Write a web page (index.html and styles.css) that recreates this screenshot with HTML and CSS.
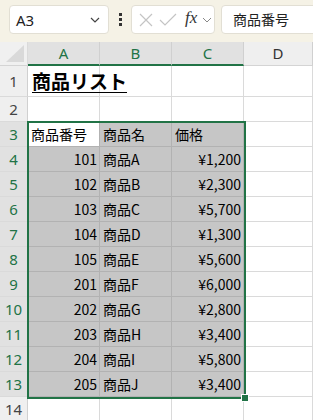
FILE: index.html
```html
<!DOCTYPE html>
<html lang="ja">
<head>
    <meta charset="UTF-8">
    <title>商品リスト</title>
    <link rel="stylesheet" href="styles.css">
</head>
<body>
    <div class="toolbar">
        <div class="namebox">
            <span>A3</span>
            <svg class="chev" width="10" height="6" viewBox="0 0 10 6"><polyline points="1,1 5,5 9,1" fill="none" stroke="#444" stroke-width="1.2"/></svg>
        </div>
        <div class="dots"><i></i><i></i><i></i></div>
        <div class="fbtns">
            <svg width="16" height="16" viewBox="0 0 16 16"><path d="M2 2 L14 14 M14 2 L2 14" stroke="#c4c4c4" stroke-width="1.2"/></svg>
            <svg width="18" height="16" viewBox="0 0 18 16"><polyline points="1,8 6,13 17,2" fill="none" stroke="#c4c4c4" stroke-width="1.2"/></svg>
            <span class="fx">fx</span>
            <svg width="10" height="6" viewBox="0 0 10 6"><polyline points="1,1 5,5 9,1" fill="none" stroke="#888" stroke-width="1"/></svg>
        </div>
        <div class="formula">商品番号</div>
    </div>

    <div class="sheet">
        <div class="corner"><span class="tri"></span></div>
        <div class="colhead sel">A</div>
        <div class="colhead sel">B</div>
        <div class="colhead sel">C</div>
        <div class="colhead">D</div>

        <div class="rowhead tall">1</div>
        <div class="cell tall title">商品リスト</div>
        <div class="cell tall"></div>
        <div class="cell tall"></div>
        <div class="cell tall"></div>

        <div class="rowhead">2</div>
        <div class="cell"></div>
        <div class="cell"></div>
        <div class="cell"></div>
        <div class="cell"></div>

        <div class="rowhead sel">3</div>
        <div class="cell active">商品番号</div>
        <div class="cell hl">商品名</div>
        <div class="cell hl">価格</div>
        <div class="cell"></div>

        <div class="rowhead sel">4</div>
        <div class="cell hl num">101</div>
        <div class="cell hl">商品A</div>
        <div class="cell hl num">¥1,200</div>
        <div class="cell"></div>

        <div class="rowhead sel">5</div>
        <div class="cell hl num">102</div>
        <div class="cell hl">商品B</div>
        <div class="cell hl num">¥2,300</div>
        <div class="cell"></div>

        <div class="rowhead sel">6</div>
        <div class="cell hl num">103</div>
        <div class="cell hl">商品C</div>
        <div class="cell hl num">¥5,700</div>
        <div class="cell"></div>

        <div class="rowhead sel">7</div>
        <div class="cell hl num">104</div>
        <div class="cell hl">商品D</div>
        <div class="cell hl num">¥1,300</div>
        <div class="cell"></div>

        <div class="rowhead sel">8</div>
        <div class="cell hl num">105</div>
        <div class="cell hl">商品E</div>
        <div class="cell hl num">¥5,600</div>
        <div class="cell"></div>

        <div class="rowhead sel">9</div>
        <div class="cell hl num">201</div>
        <div class="cell hl">商品F</div>
        <div class="cell hl num">¥6,000</div>
        <div class="cell"></div>

        <div class="rowhead sel">10</div>
        <div class="cell hl num">202</div>
        <div class="cell hl">商品G</div>
        <div class="cell hl num">¥2,800</div>
        <div class="cell"></div>

        <div class="rowhead sel">11</div>
        <div class="cell hl num">203</div>
        <div class="cell hl">商品H</div>
        <div class="cell hl num">¥3,400</div>
        <div class="cell"></div>

        <div class="rowhead sel">12</div>
        <div class="cell hl num">204</div>
        <div class="cell hl">商品I</div>
        <div class="cell hl num">¥5,800</div>
        <div class="cell"></div>

        <div class="rowhead sel">13</div>
        <div class="cell hl num">205</div>
        <div class="cell hl">商品J</div>
        <div class="cell hl num">¥3,400</div>
        <div class="cell"></div>

        <div class="rowhead">14</div>
        <div class="cell"></div>
        <div class="cell"></div>
        <div class="cell"></div>
        <div class="cell"></div>

        <!-- selection outline over A3:C13 -->
        <div class="selection"><span class="handle"></span></div>
    </div>
</body>
</html>
```

FILE: styles.css
```css
body {
    margin: 0;
    width: 313px;
    height: 420px;
    overflow: hidden;
    background: #ffffff;
    font-family: "Noto Sans CJK JP", "Noto Sans", sans-serif;
    color: #000;
}

.toolbar {
    height: 42px;
    box-sizing: border-box;
    background: #f5f2e6;
    display: flex;
    align-items: flex-start;
    padding: 5px 0 0 9px;
    white-space: nowrap;
    overflow: hidden;
}

.toolbar > div {
    flex-shrink: 0;
}

.namebox {
    width: 100px;
    height: 29px;
    box-sizing: border-box;
    background: #fff;
    border: 1px solid #e2dfd4;
    border-radius: 4px;
    display: flex;
    align-items: center;
    justify-content: space-between;
    padding: 0 8px 0 6px;
    font-family: "Noto Sans", sans-serif;
    font-size: 15px;
    color: #222;
}

.dots {
    width: 22px;
    height: 29px;
    display: flex;
    flex-direction: column;
    align-items: center;
    justify-content: center;
    gap: 2px;
}

.dots i {
    display: block;
    width: 3px;
    height: 3px;
    background: #333;
}

.fbtns {
    width: 84px;
    height: 29px;
    box-sizing: border-box;
    background: #fff;
    border: 1px solid #e2dfd4;
    border-radius: 4px;
    display: flex;
    align-items: center;
    gap: 5px;
    padding-left: 6px;
}

.fx {
    font-family: "Liberation Serif", serif;
    font-style: italic;
    font-size: 17px;
    color: #333;
    margin-left: 3px;
    margin-top: -3px;
}

.formula {
    margin-left: 6px;
    width: 120px;
    height: 29px;
    box-sizing: border-box;
    background: #fff;
    border: 1px solid #e2dfd4;
    border-radius: 4px 0 0 4px;
    padding-left: 11px;
    font-size: 14px;
    line-height: 27px;
    color: #222;
}

.sheet {
    position: relative;
    display: grid;
    grid-template-columns: 28px 72px 72px 72px 69px;
    grid-template-rows: 24px 31px repeat(13, 25px);
}

.corner,
.colhead,
.rowhead,
.cell {
    box-sizing: border-box;
    border-right: 1px solid #dadada;
    border-bottom: 1px solid #dadada;
}

.corner {
    background: #f0f0f0;
    border-bottom-color: #d4d4d4;
    position: relative;
}

.tri {
    position: absolute;
    right: 3px;
    bottom: 3px;
    width: 0;
    height: 0;
    border-left: 18px solid transparent;
    border-bottom: 17px solid #d9d9d9;
}

.colhead {
    background: #efefef;
    border-right-color: #d0d0d0;
    border-bottom-color: #d4d4d4;
    font-family: "Noto Sans", sans-serif;
    font-size: 15px;
    color: #333;
    text-align: center;
    line-height: 23px;
}

.colhead.sel {
    background: #e1e1e1;
    color: #217346;
    border-bottom: 2px solid #217346;
    line-height: 22px;
}

.rowhead {
    background: #efefef;
    border-right-color: #d0d0d0;
    font-family: "Noto Sans", sans-serif;
    font-size: 15px;
    color: #444;
    text-align: center;
    display: flex;
    align-items: center;
    justify-content: center;
}

.rowhead.sel {
    background: #e1e1e1;
    color: #217346;
}

.cell {
    font-size: 14px;
    line-height: 24px;
    padding: 0 2px 0 3px;
    white-space: nowrap;
    overflow: visible;
}

.cell.hl {
    background: #c6c6c6;
    border-color: #b2b2b2;
}

.cell.active {
    background: #fff;
    border-color: #b2b2b2;
}

.cell.num {
    text-align: right;
}

.title {
    font-size: 19px;
    font-weight: bold;
    text-decoration: underline;
    text-underline-offset: 3px;
    line-height: 30px;
    padding-left: 4px;
}

.selection {
    position: absolute;
    left: 27px;
    top: 79px;
    width: 219px;
    height: 278px;
    box-sizing: border-box;
    border: 2px solid #217346;
    pointer-events: none;
}

.handle {
    position: absolute;
    right: -5px;
    bottom: -5px;
    width: 6px;
    height: 6px;
    background: #217346;
    border: 1px solid #fff;
}
```
